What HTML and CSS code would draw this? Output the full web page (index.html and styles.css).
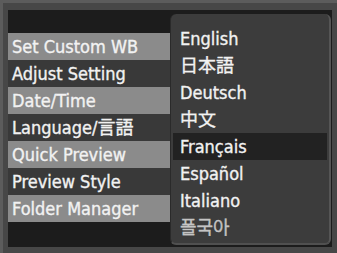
FILE: index.html
```html
<!DOCTYPE html>
<html>
<head>
<meta charset="utf-8">
<link rel="stylesheet" href="styles.css">
</head>
<body>
<div class="frame">
  <div class="screen">
    <div class="topbar"></div>
    <ul class="menu">
      <li class="row light">Set Custom WB</li>
      <li class="row dark">Adjust Setting</li>
      <li class="row light">Date/Time</li>
      <li class="row dark">Language/言語</li>
      <li class="row light">Quick Preview</li>
      <li class="row dark">Preview Style</li>
      <li class="row light">Folder Manager</li>
    </ul>
    <div class="bottombar"></div>
    <ul class="popup">
      <li class="lang">English</li>
      <li class="lang">日本語</li>
      <li class="lang">Deutsch</li>
      <li class="lang">中文</li>
      <li class="lang selected">Français</li>
      <li class="lang">Español</li>
      <li class="lang">Italiano</li>
      <li class="lang dim">폴국아</li>
    </ul>
  </div>
</div>
</body>
</html>
```
FILE: styles.css
```css
html, body {
  margin: 0;
  padding: 0;
  background: #474747;
}
.frame {
  width: 337px;
  height: 253px;
  box-sizing: border-box;
  padding: 10px 5px 6px 8px;
  background: #474747;
  box-shadow: inset 3px 3px 0 #5c5c5c;
  font-family: "DejaVu Sans Condensed", "DejaVu Sans", "Noto Sans CJK JP", sans-serif;
  font-size: 18px;
  color: #f2f2f2;
  -webkit-text-stroke: 0.35px currentColor;
}
.screen {
  position: relative;
  height: 100%;
  background: #1c1c1c;
  display: flex;
  flex-direction: column;
}
.topbar {
  height: 23px;
}
.menu {
  list-style: none;
  margin: 0;
  padding: 0;
  width: 166px;
}
.row {
  height: 27px;
  line-height: 27px;
  padding-left: 4px;
  white-space: nowrap;
}
.row.light {
  background: #8b8b8b;
}
.row.dark {
  background: #393939;
}
.bottombar {
  flex: 1;
}
.popup {
  position: absolute;
  left: 162px;
  top: 4px;
  width: 161px;
  height: 231px;
  box-sizing: border-box;
  margin: 0;
  padding: 11px 2px 0 2px;
  list-style: none;
  background: #3c3c3c;
  border-radius: 6px;
  border-left: 1px solid #2a2a2a;
  border-right: 2px solid #555;
  border-bottom: 2px solid #505050;
}
.lang {
  height: 27px;
  line-height: 27px;
  padding-left: 7px;
  white-space: nowrap;
}
.lang.selected {
  background: #222222;
}
.lang.dim {
  color: #c4c4c4;
}
```
